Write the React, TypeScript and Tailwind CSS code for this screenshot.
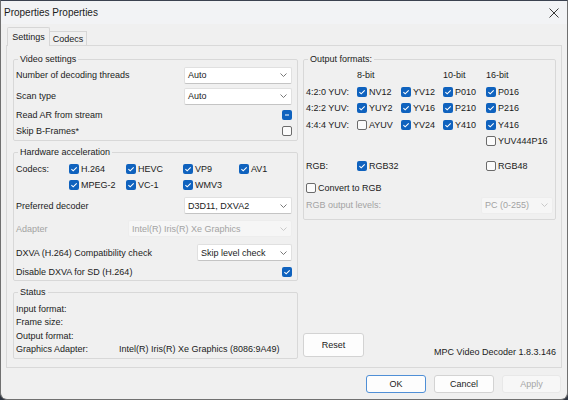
import clsx from "clsx"

type CheckState = "on" | "off" | "mixed"

function Box({ state }: { state: CheckState }) {
  if (state === "off") {
    return (
      <span className="w-[10px] h-[10px] shrink-0 rounded-[2px] border border-[#6b6b6b] bg-[#fbfbfb]" />
    )
  }
  return (
    <span className="w-[10px] h-[10px] shrink-0 rounded-[2px] bg-[#0f62be] flex items-center justify-center">
      <svg width="10" height="10" viewBox="0 0 10 10">
        {state === "on" ? (
          <path d="M2.4 5.1 4.2 6.8 7.7 3.3" stroke="#fff" strokeWidth="1.1" fill="none" />
        ) : (
          <path d="M3 5h4" stroke="#fff" strokeWidth="1.2" />
        )}
      </svg>
    </span>
  )
}

function Check({ label, state = "on" }: { label: string; state?: CheckState }) {
  return (
    <span className="flex items-center gap-[2px] whitespace-nowrap">
      <Box state={state} />
      {label}
    </span>
  )
}

function Chevron({ color }: { color: string }) {
  return (
    <svg width="7" height="4" viewBox="0 0 7 4" className="shrink-0">
      <path d="M0.5 0.5 3.5 3.5 6.5 0.5" stroke={color} strokeWidth="0.9" fill="none" />
    </svg>
  )
}

function Combo({
  value,
  className,
  disabled,
}: {
  value: string
  className: string
  disabled?: boolean
}) {
  return (
    <div
      className={clsx(
        "h-[17px] flex items-center justify-between pl-[3px] pr-[4px] rounded-[2px] border",
        disabled
          ? "bg-[#f6f6f6] border-[#ededed] text-[#a3a3a3]"
          : "bg-white border-[#e0e0e0] border-b-[#c4c4c4]",
        className
      )}
    >
      <span className="whitespace-nowrap">{value}</span>
      <Chevron color={disabled ? "#c4c4c4" : "#6a6a6a"} />
    </div>
  )
}

function Group({
  title,
  className,
  children,
}: React.PropsWithChildren<{ title: string; className?: string }>) {
  return (
    <fieldset className={clsx("border border-[#d8d8d8] rounded-[2px] pl-[2px]", className)}>
      <legend className="ml-[2px] px-[2px] leading-[12px]">{title}</legend>
      {children}
    </fieldset>
  )
}

function Button({
  children,
  className,
  variant = "normal",
}: React.PropsWithChildren<{ className: string; variant?: "normal" | "default" | "disabled" }>) {
  return (
    <div
      className={clsx(
        "flex items-center justify-center rounded-[3px] border",
        variant === "normal" && "bg-[#fdfdfd] border-[#d3d3d3]",
        variant === "default" && "bg-[#fdfdfd] border-[#4f8fd6]",
        variant === "disabled" && "bg-[#f7f7f7] border-[#e8e8e8] text-[#a6a6a6]",
        className
      )}
    >
      {children}
    </div>
  )
}

function VideoSettings() {
  return (
    <Group title="Video settings" className="pr-[5px] pb-[2px]">
      <div className="mt-[1px] h-[18px] flex items-center justify-between">
        <span>Number of decoding threads</span>
        <Combo value="Auto" className="w-[108px]" />
      </div>
      <div className="mt-[3px] h-[18px] flex items-center justify-between">
        <span>Scan type</span>
        <Combo value="Auto" className="w-[108px]" />
      </div>
      <div className="mt-[3px] h-[14px] flex items-center justify-between">
        <span>Read AR from stream</span>
        <Box state="mixed" />
      </div>
      <div className="mt-[2px] h-[14px] flex items-center justify-between">
        <span>Skip B-Frames*</span>
        <Box state="off" />
      </div>
    </Group>
  )
}

function HardwareAcceleration() {
  return (
    <Group title="Hardware acceleration" className="mt-[5px] pr-[5px] pb-[1px]">
      <div className="mt-[3px] grid grid-cols-[53px_57px_57px_56px_1fr] auto-rows-[16px] items-center">
        <span>Codecs:</span>
        <Check label="H.264" />
        <Check label="HEVC" />
        <Check label="VP9" />
        <Check label="AV1" />
        <span className="col-start-2">
          <Check label="MPEG-2" />
        </span>
        <Check label="VC-1" />
        <Check label="WMV3" />
      </div>
      <div className="mt-[4px] h-[17px] flex items-center justify-between">
        <span>Preferred decoder</span>
        <Combo value="D3D11, DXVA2" className="w-[108px]" />
      </div>
      <div className="mt-[6px] h-[17px] flex items-center justify-between">
        <span className="text-[#a3a3a3]">Adapter</span>
        <Combo value="Intel(R) Iris(R) Xe Graphics" className="w-[164px]" disabled />
      </div>
      <div className="mt-[7px] h-[17px] flex items-center justify-between">
        <span>DXVA (H.264) Compatibility check</span>
        <Combo value="Skip level check" className="w-[95px]" />
      </div>
      <div className="mt-[4px] h-[14px] flex items-center justify-between">
        <span>Disable DXVA for SD (H.264)</span>
        <Box state="on" />
      </div>
    </Group>
  )
}

function Status() {
  return (
    <Group title="Status" className="mt-[5px] pb-[2px]">
      <div className="mt-[4px] grid grid-cols-[103px_1fr] auto-rows-[13.5px] items-center">
        <span>Input format:</span>
        <span />
        <span>Frame size:</span>
        <span />
        <span>Output format:</span>
        <span />
        <span>Graphics Adapter:</span>
        <span>Intel(R) Iris(R) Xe Graphics (8086:9A49)</span>
      </div>
    </Group>
  )
}

function OutputFormats() {
  return (
    <Group title="Output formats:" className="pr-[2px] pb-[5px]">
      <div className="mt-[2px] grid grid-cols-[51px_44px_42px_43px_1fr] auto-rows-[16.5px] items-center">
        <span />
        <span>8-bit</span>
        <span />
        <span>10-bit</span>
        <span>16-bit</span>

        <span>4:2:0 YUV:</span>
        <Check label="NV12" />
        <Check label="YV12" />
        <Check label="P010" />
        <Check label="P016" />

        <span>4:2:2 YUV:</span>
        <Check label="YUY2" />
        <Check label="YV16" />
        <Check label="P210" />
        <Check label="P216" />

        <span>4:4:4 YUV:</span>
        <Check label="AYUV" state="off" />
        <Check label="YV24" />
        <Check label="Y410" />
        <Check label="Y416" />

        <span className="col-start-5">
          <Check label="YUV444P16" state="off" />
        </span>
      </div>
      <div className="mt-[8px] h-[16px] grid grid-cols-[51px_129px_1fr] items-center">
        <span>RGB:</span>
        <Check label="RGB32" />
        <Check label="RGB48" state="off" />
      </div>
      <div className="mt-[6px] h-[16px] flex items-center">
        <Check label="Convert to RGB" state="off" />
      </div>
      <div className="mt-[1px] h-[17px] flex items-center justify-between">
        <span className="text-[#a3a3a3]">RGB output levels:</span>
        <Combo value="PC (0-255)" className="w-[72px]" disabled />
      </div>
    </Group>
  )
}

export default function App() {
  return (
    <div className="w-[568px] h-[400px] bg-[#2d3440] font-['Liberation_Sans',Arial,sans-serif] text-[9px] leading-[12px] text-[#1b1b1b]">
      <div className="w-full h-full flex flex-col bg-[#f0f0f0] border border-[#707070] border-t-[#3b4250] rounded-b-[7px] overflow-hidden">
        <div className="h-[23px] shrink-0 flex items-center justify-between pl-[3px] pr-[8px] bg-[#f2f3f5]">
          <span className="text-[10px]">Properties Properties</span>
          <svg width="10" height="10" viewBox="0 0 10 10">
            <path d="M0.5 0.5 9.5 9.5M9.5 0.5 0.5 9.5" stroke="#222" strokeWidth="0.9" />
          </svg>
        </div>
        <div className="flex-1 flex flex-col px-[5px]">
          <div className="h-[21px] flex items-end pl-[1px]">
            <div className="relative z-10 -mb-px w-[43px] h-[19px] flex items-center justify-center pb-[1px] bg-[#f0f0f0] border border-b-0 border-[#d6d6d6] rounded-t-[2px]">
              Settings
            </div>
            <div className="w-[37px] h-[14px] flex items-center justify-center pt-[1px] border border-l-0 border-b-0 border-[#d6d6d6] bg-[#f0f0f0]">
              Codecs
            </div>
          </div>
          <div className="h-[323px] flex gap-[5px] pl-[6px] pr-[5px] pt-[7px] pb-[8px] border border-[#d9d9d9]">
            <div className="w-[285px] flex flex-col">
              <VideoSettings />
              <HardwareAcceleration />
              <Status />
            </div>
            <div className="flex-1 flex flex-col">
              <OutputFormats />
              <div className="mt-auto flex items-end justify-between">
                <Button className="w-[61px] h-[24px] mb-[2px]">Reset</Button>
                <span className="mb-[1px]">MPC Video Decoder 1.8.3.146</span>
              </div>
            </div>
          </div>
          <div className="mt-[7px] flex justify-end gap-[8px] pr-[1px]">
            <Button className="w-[60px] h-[18px]" variant="default">
              OK
            </Button>
            <Button className="w-[60px] h-[18px]">Cancel</Button>
            <Button className="w-[59px] h-[18px]" variant="disabled">
              Apply
            </Button>
          </div>
        </div>
      </div>
    </div>
  )
}
